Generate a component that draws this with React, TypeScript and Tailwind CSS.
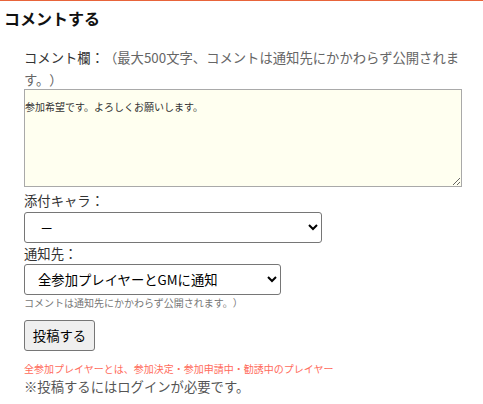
import React from 'react';

const App: React.FC = () => {
  return (
    <div className="min-h-[404px] bg-white border-t border-[#e8643a] font-['Noto_Sans_CJK_JP',sans-serif] text-[#333] [text-spacing-trim:space-all]">
      <h2 className="px-1 pt-[5px] text-base font-bold leading-6 text-[#111]">コメントする</h2>

      <div className="mt-[17px] pl-6 w-[464px]">
        <p className="text-[13.33px] leading-[22px]">
          <span className="text-[#333]">コメント欄：</span>
          <span className="text-[#666]">（最大500文字、コメントは通知先にかかわらず公開されます。）</span>
        </p>

        <textarea
          className="-mt-[2px] block w-[438px] h-[98px] border border-[#a9a9a9] bg-[#fffff0] px-0 pt-[10px] text-[10px] leading-[14px] text-[#333] resize-y"
          defaultValue="参加希望です。よろしくお願いします。"
        />

        <div className="mt-[3px] text-[13.33px] leading-[22px] text-[#333]">添付キャラ：</div>
        <select className="block w-[298px] h-[31px] rounded-[3px] border border-[#767676] bg-white pl-[11px] text-[13.33px] text-black">
          <option>－</option>
        </select>

        <div className="text-[13.33px] leading-[21px] text-[#333]">通知先：</div>
        <select className="block w-[257px] h-[31px] rounded-[3px] border border-[#767676] bg-white pl-[9px] text-[13.33px] text-black">
          <option>全参加プレイヤーとGMに通知</option>
        </select>
        <p className="text-[10px] leading-[16px] text-[#777]">コメントは通知先にかかわらず公開されます。）</p>

        <button className="mt-[9px] block h-[31px] w-[71px] rounded-[3px] border border-[#767676] bg-[#efefef] text-[13.33px] text-black">
          投稿する
        </button>

        <p className="mt-[10px] text-[10px] leading-[16px] text-[#ff6b5b]">
          全参加プレイヤーとは、参加決定・参加申請中・勧誘中のプレイヤー
        </p>
        <p className="text-[13.33px] leading-[20px] text-[#555]">※投稿するにはログインが必要です。</p>
      </div>
    </div>
  );
};

export default App;
